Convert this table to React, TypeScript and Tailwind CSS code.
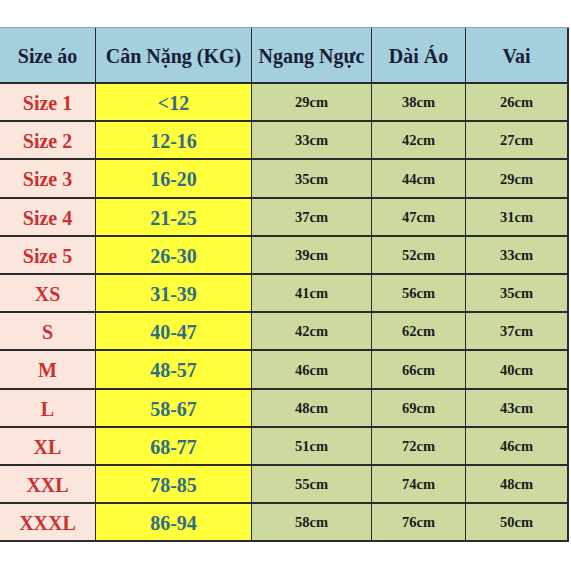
import React from "react";

const rows: [string, string, string, string, string][] = [
  ["Size 1", "<12", "29cm", "38cm", "26cm"],
  ["Size 2", "12-16", "33cm", "42cm", "27cm"],
  ["Size 3", "16-20", "35cm", "44cm", "29cm"],
  ["Size 4", "21-25", "37cm", "47cm", "31cm"],
  ["Size 5", "26-30", "39cm", "52cm", "33cm"],
  ["XS", "31-39", "41cm", "56cm", "35cm"],
  ["S", "40-47", "42cm", "62cm", "37cm"],
  ["M", "48-57", "46cm", "66cm", "40cm"],
  ["L", "58-67", "48cm", "69cm", "43cm"],
  ["XL", "68-77", "51cm", "72cm", "46cm"],
  ["XXL", "78-85", "55cm", "74cm", "48cm"],
  ["XXXL", "86-94", "58cm", "76cm", "50cm"],
];

const headers = ["Size áo", "Cân Nặng (KG)", "Ngang Ngực", "Dài Áo", "Vai"];

export default function App() {
  return (
    <div
      className="w-[571px] h-[571px] bg-white pt-[27px]"
      style={{ fontFamily: '"Liberation Serif", "Times New Roman", serif' }}
    >
      <div className="grid grid-cols-[96px_156px_120px_94px_103px] w-[569px] border-t border-t-[#8aa9b5]">
        {headers.map((h, i) => (
          <div
            key={h}
            className={`h-[56px] pt-[2px] flex items-center justify-center bg-[#a3cfdf] text-[#1b1e36] font-bold text-[20px] border-b-2 border-b-[#2b2b2b] ${i < 4 ? "border-r border-r-[#2b2b2b]" : "border-r-2 border-r-[#2b2b2b]"}`}
          >
            {h}
          </div>
        ))}
        {rows.map((r) => (
          <React.Fragment key={r[0]}>
            <div className="h-[38.2px] pt-[2px] flex items-center justify-center bg-[#fae6dd] text-[#cc3030] font-bold text-[20px] border-b-2 border-b-[#2b2b2b] border-r border-r-[#2b2b2b]">
              {r[0]}
            </div>
            <div className="h-[38.2px] pt-[2px] flex items-center justify-center bg-[#ffff3c] text-[#2f6e84] font-bold text-[20px] border-b-2 border-b-[#2b2b2b] border-r border-r-[#2b2b2b]">
              {r[1]}
            </div>
            <div className="h-[38.2px] pt-[2px] flex items-center justify-center bg-[#ccd99f] text-[#1c1c1c] font-bold text-[14.5px] border-b-2 border-b-[#2b2b2b] border-r border-r-[#2b2b2b]">
              {r[2]}
            </div>
            <div className="h-[38.2px] pt-[2px] flex items-center justify-center bg-[#ccd99f] text-[#1c1c1c] font-bold text-[14.5px] border-b-2 border-b-[#2b2b2b] border-r border-r-[#2b2b2b]">
              {r[3]}
            </div>
            <div className="h-[38.2px] pt-[2px] flex items-center justify-center bg-[#ccd99f] text-[#1c1c1c] font-bold text-[14.5px] border-b-2 border-b-[#2b2b2b] border-r-2 border-r-[#2b2b2b]">
              {r[4]}
            </div>
          </React.Fragment>
        ))}
      </div>
    </div>
  );
}
